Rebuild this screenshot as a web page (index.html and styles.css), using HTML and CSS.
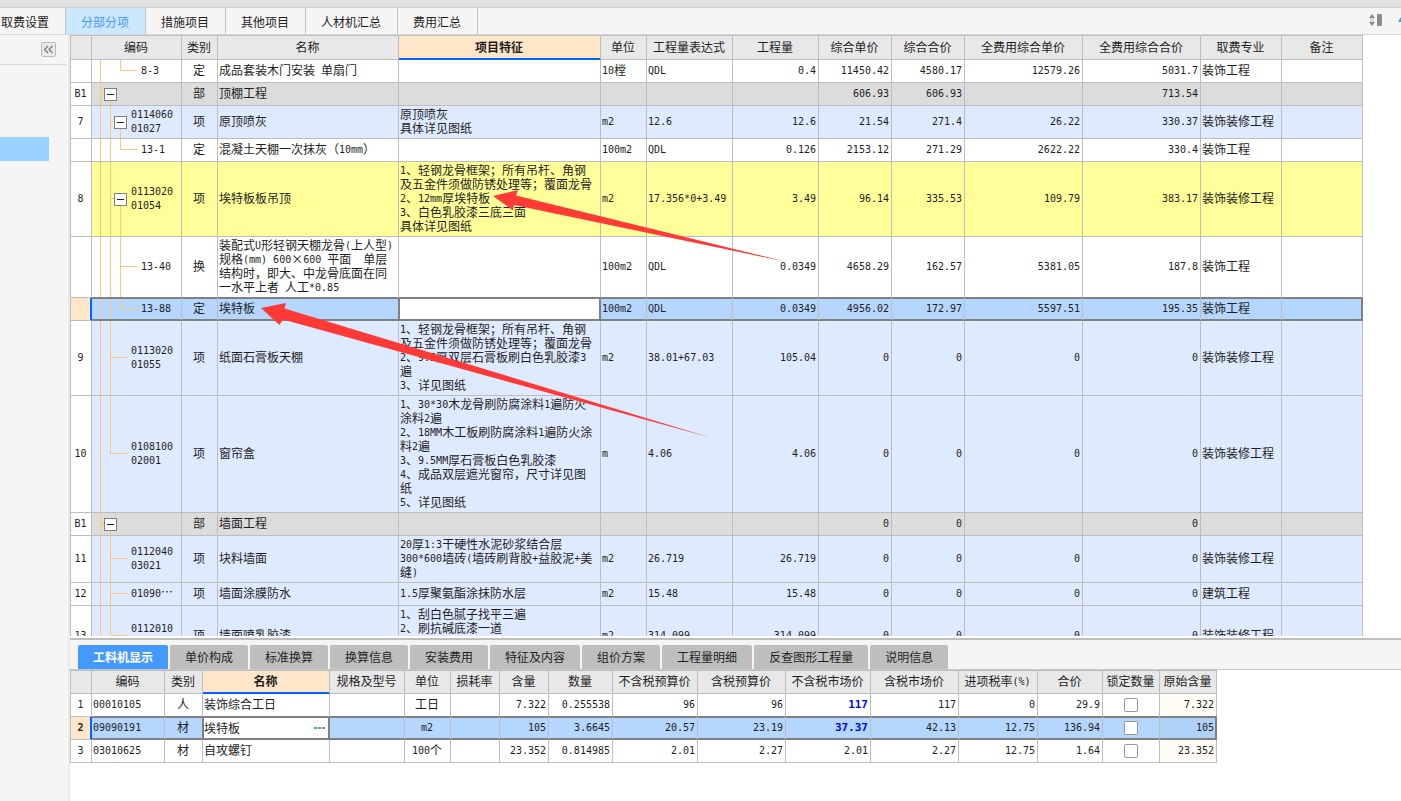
FILE: index.html
```html
<!DOCTYPE html>
<html lang="zh-CN">
<head>
<meta charset="utf-8">
<title>分部分项</title>
<link rel="stylesheet" href="styles.css">
</head>
<body>
<div class="app">
  <div class="titlebar"></div>
  <nav class="topbar">
    <button class="top-tab first">取费设置</button>
    <button class="top-tab active">分部分项</button>
    <button class="top-tab">措施项目</button>
    <button class="top-tab">其他项目</button>
    <button class="top-tab">人材机汇总</button>
    <button class="top-tab">费用汇总</button>
    <svg class="top-icons" width="33" height="16" viewBox="0 0 33 16">
      <path d="M1 6 4 2 7 6zM1 10 4 14 7 10z" fill="#8c8c8c"/>
      <path d="M4 6V10" stroke="#d8d8d8" stroke-width="4"/>
      <rect x="9" y="2" width="5" height="12" rx="1" fill="#8c8c8c"/>
      <path d="M30 10 33 5V10z" fill="#3f9bff"/>
    </svg>
  </nav>
  <div class="workspace">
    <aside class="sidebar">
      <div class="side-head">
        <button class="collapse">
          <svg width="11" height="9" viewBox="0 0 11 9"><path d="M5 1 1.500 4.500 5 8M9.500 1 6 4.500 9.500 8" fill="none" stroke="#777" stroke-width="1.200"/></svg>
        </button>
      </div>
      <div class="side-item"></div>
    </aside>
    <main class="panes">
      <section class="main-pane">
        <table class="grid main-grid">
          <colgroup><col class="w21"><col class="w90"><col class="w36"><col class="w181"><col class="w202"><col class="w46"><col class="w86"><col class="w86"><col class="w73"><col class="w73"><col class="w118"><col class="w118"><col class="w81"><col class="w81"></colgroup>
          <thead>
            <tr><th></th><th>编码</th><th>类别</th><th>名称</th><th class="current">项目特征</th><th>单位</th><th>工程量表达式</th><th>工程量</th><th>综合单价</th><th>综合合价</th><th>全费用综合单价</th><th>全费用综合合价</th><th>取费专业</th><th>备注</th></tr>
          </thead>
          <tbody>
            <tr><td class="idx"></td><td class="tree quota last no-mid"><div class="node">8-3</div></td><td class="c">定</td><td>成品套装木门安装<span class="m"> </span>单扇门</td><td></td><td><span class="m">10</span>樘</td><td class="n">QDL</td><td class="n r">0.4</td><td class="n r">11450.42</td><td class="n r">4580.17</td><td class="n r">12579.26</td><td class="n r">5031.7</td><td>装饰工程</td><td></td></tr>
            <tr class="section"><td class="idx">B1</td><td class="tree root"><div class="node"><button class="toggle"></button></div></td><td class="c">部</td><td>顶棚工程</td><td></td><td></td><td></td><td></td><td class="n r">606.93</td><td class="n r">606.93</td><td></td><td class="n r">713.54</td><td></td><td></td></tr>
            <tr class="item"><td class="idx">7</td><td class="tree parent"><div class="node"><button class="toggle"></button><span>0114060<br>01027</span></div></td><td class="c">项</td><td>原顶喷灰</td><td>原顶喷灰<br>具体详见图纸</td><td class="n">m2</td><td class="n">12.6</td><td class="n r">12.6</td><td class="n r">21.54</td><td class="n r">271.4</td><td class="n r">26.22</td><td class="n r">330.37</td><td>装饰装修工程</td><td></td></tr>
            <tr><td class="idx"></td><td class="tree quota last"><div class="node">13-1</div></td><td class="c">定</td><td>混凝土天棚一次抹灰（<span class="m">10mm</span>）</td><td></td><td class="n">100m2</td><td class="n">QDL</td><td class="n r">0.126</td><td class="n r">2153.12</td><td class="n r">271.29</td><td class="n r">2622.22</td><td class="n r">330.4</td><td>装饰工程</td><td></td></tr>
            <tr class="marked"><td class="idx">8</td><td class="tree parent"><div class="node"><button class="toggle"></button><span>0113020<br>01054</span></div></td><td class="c">项</td><td>埃特板板吊顶</td><td><span class="m">1</span>、轻钢龙骨框架；所有吊杆、角钢<br>及五金件须做防锈处理等；覆面龙骨<br><span class="m">2</span>、<span class="m">12mm</span>厚埃特板<br><span class="m">3</span>、白色乳胶漆三底三面<br>具体详见图纸</td><td class="n">m2</td><td class="n">17.356*0+3.49</td><td class="n r">3.49</td><td class="n r">96.14</td><td class="n r">335.53</td><td class="n r">109.79</td><td class="n r">383.17</td><td>装饰装修工程</td><td></td></tr>
            <tr><td class="idx"></td><td class="tree quota"><div class="node">13-40</div></td><td class="c">换</td><td>装配式<span class="m">U</span>形轻钢天棚龙骨<span class="m">(</span>上人型<span class="m">)</span><br>规格<span class="m">(mm) 600</span>×<span class="m">600 </span>平面　单层<br>结构时，即大、中龙骨底面在同<br>一水平上者<span class="m"> </span>人工<span class="m">*0.85</span></td><td></td><td class="n">100m2</td><td class="n">QDL</td><td class="n r">0.0349</td><td class="n r">4658.29</td><td class="n r">162.57</td><td class="n r">5381.05</td><td class="n r">187.8</td><td>装饰工程</td><td></td></tr>
            <tr class="selected"><td class="idx"></td><td class="tree quota last"><div class="node">13-88</div></td><td class="c">定</td><td>埃特板</td><td class="editing"><input class="cell-input" type="text"></td><td class="n">100m2</td><td class="n">QDL</td><td class="n r">0.0349</td><td class="n r">4956.02</td><td class="n r">172.97</td><td class="n r">5597.51</td><td class="n r">195.35</td><td>装饰工程</td><td></td></tr>
            <tr class="item"><td class="idx">9</td><td class="tree leaf"><div class="node"><span>0113020<br>01055</span></div></td><td class="c">项</td><td>纸面石膏板天棚</td><td><span class="m">1</span>、轻钢龙骨框架；所有吊杆、角钢<br>及五金件须做防锈处理等；覆面龙骨<br><span class="m">2</span>、<span class="m">9.5</span>厚双层石膏板刷白色乳胶漆<span class="m">3</span><br>遍<br><span class="m">3</span>、详见图纸</td><td class="n">m2</td><td class="n">38.01+67.03</td><td class="n r">105.04</td><td class="n r">0</td><td class="n r">0</td><td class="n r">0</td><td class="n r">0</td><td>装饰装修工程</td><td></td></tr>
            <tr class="item"><td class="idx">10</td><td class="tree leaf final"><div class="node"><span>0108100<br>02001</span></div></td><td class="c">项</td><td>窗帘盒</td><td><span class="m">1</span>、<span class="m">30*30</span>木龙骨刷防腐涂料<span class="m">1</span>遍防火<br>涂料<span class="m">2</span>遍<br><span class="m">2</span>、<span class="m">18MM</span>木工板刷防腐涂料<span class="m">1</span>遍防火涂<br>料<span class="m">2</span>遍<br><span class="m">3</span>、<span class="m">9.5MM</span>厚石膏板白色乳胶漆<br><span class="m">4</span>、成品双层遮光窗帘，尺寸详见图<br>纸<br><span class="m">5</span>、详见图纸</td><td class="n">m</td><td class="n">4.06</td><td class="n r">4.06</td><td class="n r">0</td><td class="n r">0</td><td class="n r">0</td><td class="n r">0</td><td>装饰装修工程</td><td></td></tr>
            <tr class="section"><td class="idx">B1</td><td class="tree root"><div class="node"><button class="toggle"></button></div></td><td class="c">部</td><td>墙面工程</td><td></td><td></td><td></td><td></td><td class="n r">0</td><td class="n r">0</td><td></td><td class="n r">0</td><td></td><td></td></tr>
            <tr class="item"><td class="idx">11</td><td class="tree leaf"><div class="node"><span>0112040<br>03021</span></div></td><td class="c">项</td><td>块料墙面</td><td><span class="m">20</span>厚<span class="m">1:3</span>干硬性水泥砂浆结合层<br><span class="m">300*600</span>墙砖<span class="m">(</span>墙砖刷背胶<span class="m">+</span>益胶泥<span class="m">+</span>美<br>缝<span class="m">)</span></td><td class="n">m2</td><td class="n">26.719</td><td class="n r">26.719</td><td class="n r">0</td><td class="n r">0</td><td class="n r">0</td><td class="n r">0</td><td>装饰装修工程</td><td></td></tr>
            <tr class="item"><td class="idx">12</td><td class="tree leaf"><div class="node"><span>01090<span class="dots">⋯</span></span></div></td><td class="c">项</td><td>墙面涂膜防水</td><td><span class="m">1.5</span>厚聚氨酯涂抹防水层</td><td class="n">m2</td><td class="n">15.48</td><td class="n r">15.48</td><td class="n r">0</td><td class="n r">0</td><td class="n r">0</td><td class="n r">0</td><td>建筑工程</td><td></td></tr>
            <tr class="item"><td class="idx">13</td><td class="tree leaf"><div class="node"><span>0112010<br>&nbsp;</span></div></td><td class="c">项</td><td>墙面喷乳胶漆</td><td><span class="m">1</span>、刮白色腻子找平三遍<br><span class="m">2</span>、刷抗碱底漆一道<br>&nbsp;<br>&nbsp;</td><td class="n">m2</td><td class="n">314.099</td><td class="n r">314.099</td><td class="n r">0</td><td class="n r">0</td><td class="n r">0</td><td class="n r">0</td><td>装饰装修工程</td><td></td></tr>
          </tbody>
        </table>
        <svg class="arrows" width="1293" height="601" viewBox="70 35 1293 601" fill="#fd3a36">
          <path d="M493 196 518 190 516 195.500 787 262 514 205 513 210.500z"/>
          <path d="M261 308 286 303 284.500 308.500 712 438 283 319.500 279.500 325z"/>
        </svg>
      </section>
      <section class="detail-pane">
        <div class="detail-tabs">
          <button class="tab on">工料机显示</button><button class="tab">单价构成</button><button class="tab">标准换算</button><button class="tab">换算信息</button><button class="tab">安装费用</button><button class="tab">特征及内容</button><button class="tab">组价方案</button><button class="tab">工程量明细</button><button class="tab">反查图形工程量</button><button class="tab">说明信息</button>
        </div>
        <table class="grid detail-grid">
          <colgroup><col class="w21"><col class="w73"><col class="w38"><col class="w127"><col class="w75"><col class="w46"><col class="w49"><col class="w49"><col class="w64"><col class="w85"><col class="w88"><col class="w85"><col class="w88"><col class="w79"><col class="w65"><col class="w57"><col class="w57"></colgroup>
          <thead>
            <tr><th></th><th>编码</th><th>类别</th><th class="current">名称</th><th>规格及型号</th><th>单位</th><th>损耗率</th><th>含量</th><th>数量</th><th>不含税预算价</th><th>含税预算价</th><th>不含税市场价</th><th>含税市场价</th><th>进项税率<span class="m">(%)</span></th><th>合价</th><th id="lock">锁定数量</th><th>原始含量</th></tr>
          </thead>
          <tbody>
            <tr><td class="idx">1</td><td class="n">00010105</td><td class="c">人</td><td>装饰综合工日</td><td></td><td class="c">工日</td><td></td><td class="n r">7.322</td><td class="n r">0.255538</td><td class="n r">96</td><td class="n r">96</td><td class="n r changed">117</td><td class="n r">117</td><td class="n r">0</td><td class="n r">29.9</td><td class="c"><input class="check" type="checkbox" aria-labelledby="lock"></td><td class="n r origin">7.322</td></tr>
            <tr class="selected"><td class="idx">2</td><td class="n">09090191</td><td class="c">材</td><td class="editing"><div class="editor"><input class="cell-input" type="text" value="埃特板"><button class="more"><svg width="11" height="2" viewBox="0 0 11 2" fill="#5b9bd5"><path d="M0 0h3v2H0zM4 0h3v2H4zM8 0h3v2H8z"/></svg></button></div></td><td></td><td class="n c">m2</td><td></td><td class="n r">105</td><td class="n r">3.6645</td><td class="n r">20.57</td><td class="n r">23.19</td><td class="n r changed">37.37</td><td class="n r">42.13</td><td class="n r">12.75</td><td class="n r">136.94</td><td class="c"><input class="check" type="checkbox" aria-labelledby="lock"></td><td class="n r origin">105</td></tr>
            <tr><td class="idx">3</td><td class="n">03010625</td><td class="c">材</td><td>自攻螺钉</td><td></td><td class="c"><span class="m">100</span>个</td><td></td><td class="n r">23.352</td><td class="n r">0.814985</td><td class="n r">2.01</td><td class="n r">2.27</td><td class="n r">2.01</td><td class="n r">2.27</td><td class="n r">12.75</td><td class="n r">1.64</td><td class="c"><input class="check" type="checkbox" aria-labelledby="lock"></td><td class="n r origin">23.352</td></tr>
          </tbody>
        </table>
      </section>
    </main>
  </div>
</div>
</body>
</html>
```

FILE: styles.css
```css
* { box-sizing: border-box; }

body {
  margin: 0;
  font: 12px/14px "Noto Sans CJK SC", sans-serif;
  color: #1e1e1e;
}

button, input {
  margin: 0;
  padding: 0;
  border: 0;
  background: none;
  font: inherit;
  color: inherit;
}

.app {
  display: flex;
  flex-direction: column;
  height: 100vh;
  overflow: hidden;
  background: #fff;
}

.titlebar {
  flex: none;
  height: 8px;
  background: #e1e1e1;
  border-bottom: 1px solid #cfcfcf;
}

.topbar {
  flex: none;
  display: flex;
  height: 27px;
  background: #f5f5f5;
  border-bottom: 1px solid #d9d9d9;
}

.top-tab {
  padding: 2px 16px 0 15px;
  border-right: 1px solid #c3c3c3;
  white-space: nowrap;
}
.top-tab.first { padding-left: 1px; }
.top-tab.active { background: #cce8ff; color: #4499ff; }

.top-icons { margin: 4px 0 0 auto; }

.workspace { flex: 1; display: flex; min-height: 0; }

.sidebar {
  flex: none;
  width: 70px;
  background: #f5f5f5;
  border-right: 2px solid #eaeaea;
}

.side-head {
  display: flex;
  justify-content: flex-end;
  align-items: center;
  width: 66px;
  height: 30px;
  padding-right: 10px;
  border-bottom: 1px solid #dadada;
}

.collapse {
  display: flex;
  align-items: center;
  justify-content: center;
  width: 15px;
  height: 15px;
  border: 1px solid #bdbdbd;
  border-radius: 2px;
  background: #e8e8e8;
}

.side-item {
  width: 49px;
  height: 24px;
  margin-top: 72px;
  background: #99d1ff;
}

.panes {
  flex: 1;
  display: flex;
  flex-direction: column;
  min-width: 0;
}

.main-pane {
  position: relative;
  flex: 1;
  min-height: 0;
  overflow: hidden;
}

.arrows { position: absolute; top: 0; left: 0; pointer-events: none; }

/* Grids */
.grid {
  table-layout: fixed;
  width: 0;
  border-spacing: 0;
  border-top: 1px solid #bdbdbd;
  border-left: 1px solid #bdbdbd;
}

.grid th, .grid td {
  height: 23px;
  padding: 1px 2px 3px 1px;
  border-right: 1px solid #bdbdbd;
  border-bottom: 1px solid #bdbdbd;
  text-align: left;
  white-space: nowrap;
  overflow: hidden;
}

.grid th {
  padding: 0 1px 2px 0;
  background: #e8e8e8;
  font-weight: normal;
  text-align: center;
}
.main-grid th { height: 24px; }

.grid th.current {
  background: #ffe6c8;
  font-weight: bold;
  border-bottom-color: #0066ff;
  box-shadow: inset 0 -1px #0066ff;
}

.w21 { width: 21px; } .w36 { width: 36px; } .w38 { width: 38px; }
.w46 { width: 46px; } .w49 { width: 49px; } .w57 { width: 57px; }
.w64 { width: 64px; } .w65 { width: 65px; } .w73 { width: 73px; }
.w75 { width: 75px; } .w79 { width: 79px; } .w81 { width: 81px; }
.w85 { width: 85px; } .w86 { width: 86px; } .w88 { width: 88px; }
.w90 { width: 90px; } .w118 { width: 118px; } .w127 { width: 127px; }
.w181 { width: 181px; } .w202 { width: 202px; }

.grid .n, .grid .idx, .node { font: 10px/14px "DejaVu Sans Mono", monospace; }
.grid .n, .grid .idx, .grid .tree { padding-top: 2px; padding-bottom: 2px; }
.m { font: 10px/0 "DejaVu Sans Mono", monospace; white-space: pre; vertical-align: 1px; }
.dots { font: 12px/0 "Noto Sans CJK SC", sans-serif; }
.grid .c, .grid .idx { text-align: center; padding-left: 0; padding-right: 1px; }
.grid .r { text-align: right; }

.section { background: #dcdcdc; }
.item { background: #deeaff; }
.marked { background: #ffff99; }
.selected { background: #b4d6ff; }
.grid .idx { background: #fff; }
.grid .origin { background: #fffcf5; }
.grid .changed { color: #0000ff; font-size: 11px; font-weight: bold; }

tr:has(+ .selected) td:not(.idx) { border-bottom-color: #808080; }
.selected td:not(.idx) {
  border-bottom-color: #808080;
  box-shadow: inset 0 1px #808080, inset 0 -1px #808080;
}
.selected td:last-child {
  border-right-color: #808080;
  box-shadow: inset 0 1px #808080, inset -1px -1px #808080;
}
.grid .selected td.origin { background: #b0d2f9; }
.selected td:has(+ .editing) { border-right-color: #808080; }
.grid .selected td.editing {
  padding: 1px 1px 3px;
  background: #fff;
  border-right-color: #808080;
  box-shadow: inset 1px 1px #808080, inset -1px -1px #808080;
}
.grid .selected .idx {
  background: #ffe6c8;
  border-right-color: #0066ff;
  box-shadow: inset -1px 0 #0066ff;
  font-weight: bold;
}

.cell-input {
  display: block;
  width: 100%;
  min-width: 0;
  height: 18px;
  outline: 0;
}
.editor { display: flex; align-items: center; padding-right: 3px; }
.more { display: flex; padding-top: 2px; }

.check {
  appearance: none;
  display: block;
  width: 14px;
  height: 14px;
  margin: 2px auto 0;
  border: 1px solid #999;
  border-radius: 2px;
  background: #fff;
}

/* Tree column: three vertical guides and one branch */
.grid .tree {
  --line: linear-gradient(#ffc57a, #ffc57a);
  padding-left: 0;
  background-image: var(--line), var(--line), var(--line), linear-gradient(#ffc57a 50%, transparent 50%);
  background-repeat: no-repeat;
  background-position: 8px 0, 18px var(--mid-y, 0), 28px var(--sub-y, 0), var(--branch-x) 50%;
  background-size: 1px 100%, 1px var(--mid, 100%), 1px var(--sub, 0), var(--branch) 2px;
}
.root { --mid: 50%; --mid-y: 100%; --branch-x: 8px; --branch: 5px; }
.parent { --sub: 50%; --sub-y: 100%; --branch-x: 18px; --branch: 5px; }
.quota { --sub: 100%; --branch-x: 28px; --branch: 17px; }
.quota.last { --sub: 50%; }
.quota.no-mid { --mid: 0; }
.leaf { --branch-x: 18px; --branch: 17px; }
.leaf.final { --mid: 50%; }

.node { display: flex; align-items: center; gap: 4px; }
.root .node { padding-left: 12px; }
.parent .node { padding-left: 22px; }
.leaf .node { padding-left: 39px; }
.quota .node { padding-left: 49px; }

.toggle {
  flex: none;
  width: 13px;
  height: 13px;
  border: 1px solid #808080;
  background: linear-gradient(#222, #222) center / 7px 1px no-repeat #fff;
}

/* Detail pane */
.detail-pane {
  flex: none;
  margin-top: 2px;
  padding-bottom: 38px;
  border-top: 2px solid #bdbdbd;
  background: #fff;
}

.detail-tabs {
  display: flex;
  gap: 2px;
  height: 30px;
  padding: 5px 0 0 8px;
  background: #f5f5f5;
  border-bottom: 1px solid #c8c8c8;
}

.tab {
  padding: 0 15px;
  border-radius: 2px 2px 0 0;
  background: #bebebe;
  white-space: nowrap;
}
.tab.on { background: #4499ff; color: #fff; font-weight: bold; }
```
